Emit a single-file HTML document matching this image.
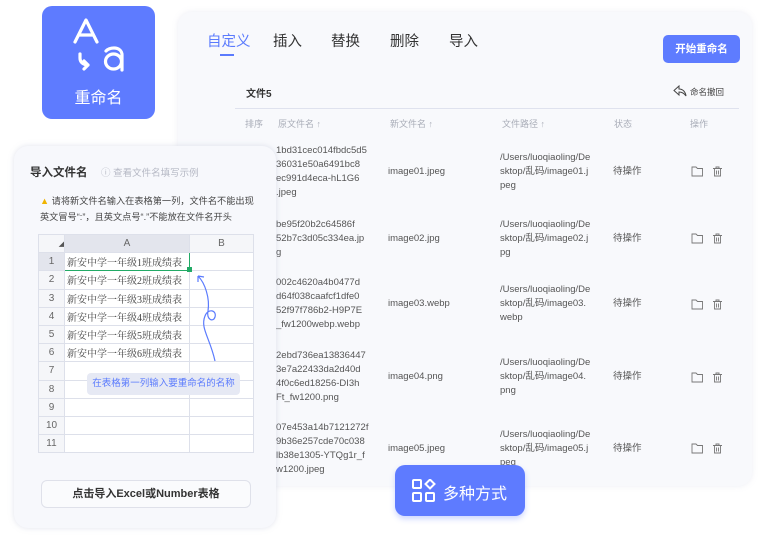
<!DOCTYPE html>
<html><head><meta charset="utf-8"><style>
*{margin:0;padding:0;box-sizing:border-box}
body{width:774px;height:545px;background:#fff;position:relative;overflow:hidden;font-family:"Liberation Sans","Noto Sans CJK SC",sans-serif;color:#333}
.abs{position:absolute}
.main{left:178px;top:12px;width:574px;height:474px;background:#f8f9fc;border-radius:14px;box-shadow:0 0 6px rgba(180,185,210,.25)}
.tab{top:30px;font-size:14.5px;color:#333}
.h{top:117px;font-size:9px;color:#a9adb8}
.c{font-size:9.5px;color:#555;line-height:14px}
.left{left:14px;top:146px;width:262px;height:382px;background:#f7f8fc;border-radius:14px;box-shadow:0 0 6px rgba(170,175,200,.35)}
table{border-collapse:collapse;font-size:10px}
td{border:1px solid #dde0ea;height:18.2px;background:#fff;color:#444;font-family:"Liberation Serif","Noto Serif CJK SC",serif}
td.n{width:26px;text-align:center;background:#f5f6f9;color:#666;font-family:"Liberation Sans",sans-serif}
</style></head><body>
<div class="abs main"></div>
<div class="abs tab" style="left:207px;color:#5b7bfd">自定义</div>
<div class="abs" style="left:220px;top:54px;width:14px;height:2px;background:#5b7bfd"></div>
<div class="abs tab" style="left:273px">插入</div>
<div class="abs tab" style="left:331px">替换</div>
<div class="abs tab" style="left:390px">删除</div>
<div class="abs tab" style="left:449px">导入</div>
<div class="abs" style="left:663px;top:35px;width:77px;height:28px;background:#5e7cff;border-radius:5px;color:#fff;font-size:10.5px;font-weight:bold;text-align:center;line-height:28px">开始重命名</div>
<div class="abs" style="left:246px;top:85px;font-size:10px;font-weight:bold;color:#333">文件5</div>
<svg class="abs" style="left:673px;top:85px" width="14" height="12" viewBox="0 0 14 12"><path d="M6 1L1 5.5 6 10V7c3 0 5 1 7 4-0.5-4-3-7-7-7V1z" fill="none" stroke="#444" stroke-width="1"/></svg>
<div class="abs" style="left:690px;top:86px;font-size:8.5px;color:#444">命名撤回</div>
<div class="abs" style="left:235px;top:108px;width:504px;height:1px;background:#dfe2ee"></div>
<div class="abs h" style="left:245px">排序</div>
<div class="abs h" style="left:278px">原文件名 ↑</div>
<div class="abs h" style="left:390px">新文件名 ↑</div>
<div class="abs h" style="left:502px">文件路径 ↑</div>
<div class="abs h" style="left:614px">状态</div>
<div class="abs h" style="left:690px">操作</div>

<div class="abs c" style="left:276px;top:144px">1bd31cec014fbdc5d5<br>36031e50a6491bc8<br>ec991d4eca-hL1G6<br>.jpeg</div>
<div class="abs c" style="left:388px;top:165px">image01.jpeg</div>
<div class="abs c" style="left:500px;top:151px">/Users/luoqiaoling/De<br>sktop/乱码/image01.j<br>peg</div>
<div class="abs c" style="left:613px;top:165px">待操作</div>

<div class="abs c" style="left:276px;top:218px">be95f20b2c64586f<br>52b7c3d05c334ea.jp<br>g</div>
<div class="abs c" style="left:388px;top:232px">image02.jpg</div>
<div class="abs c" style="left:500px;top:218px">/Users/luoqiaoling/De<br>sktop/乱码/image02.j<br>pg</div>
<div class="abs c" style="left:613px;top:232px">待操作</div>

<div class="abs c" style="left:276px;top:276px">002c4620a4b0477d<br>d64f038caafcf1dfe0<br>52f97f786b2-H9P7E<br>_fw1200webp.webp</div>
<div class="abs c" style="left:388px;top:297px">image03.webp</div>
<div class="abs c" style="left:500px;top:283px">/Users/luoqiaoling/De<br>sktop/乱码/image03.<br>webp</div>
<div class="abs c" style="left:613px;top:297px">待操作</div>

<div class="abs c" style="left:276px;top:349px">2ebd736ea13836447<br>3e7a22433da2d40d<br>4f0c6ed18256-DI3h<br>Ft_fw1200.png</div>
<div class="abs c" style="left:388px;top:370px">image04.png</div>
<div class="abs c" style="left:500px;top:356px">/Users/luoqiaoling/De<br>sktop/乱码/image04.<br>png</div>
<div class="abs c" style="left:613px;top:370px">待操作</div>

<div class="abs c" style="left:276px;top:421px">07e453a14b7121272f<br>9b36e257cde70c038<br>lb38e1305-YTQg1r_f<br>w1200.jpeg</div>
<div class="abs c" style="left:388px;top:442px">image05.jpeg</div>
<div class="abs c" style="left:500px;top:428px">/Users/luoqiaoling/De<br>sktop/乱码/image05.j<br>peg</div>
<div class="abs c" style="left:613px;top:442px">待操作</div>

<svg class="abs" style="left:690px;top:0" width="36" height="480" viewBox="0 0 36 480">
<g fill="none" stroke="#777" stroke-width="0.9">
<g id="ic"><path d="M2 167h4l1.5 1.5H12.5v7.5H2z"/><path d="M23 168.5h9M26 168.5v-1.5h3v1.5M24.5 168.5v7.5h6v-7.5M26.5 170.5v4M28.5 170.5v4"/></g>
<use href="#ic" y="67"/><use href="#ic" y="133"/><use href="#ic" y="206"/><use href="#ic" y="277"/>
</g></svg>

<div class="abs" style="left:42px;top:6px;width:113px;height:113px;background:#5e7bff;border-radius:10px"></div>
<svg class="abs" style="left:42px;top:6px" width="113" height="80" viewBox="0 0 113 80">
<g fill="none" stroke="#fff" stroke-width="3.2" stroke-linecap="round" stroke-linejoin="round">
<path d="M33 36L44 14 55 36M37 29h14"/>
<path d="M38 48v4c0 4 3 7 8 7M42 55l4 4-4 4"/>
<ellipse cx="71.5" cy="55.5" rx="8" ry="7.5"/>
<path d="M64 45c2-2 5-3 8-3 5 0 8 3 8 7v15"/>
</g></svg>
<div class="abs" style="left:42px;top:84px;width:113px;text-align:center;color:#fff;font-size:16px">重命名</div>

<div class="abs left"></div>
<div class="abs" style="left:30px;top:164px;font-size:11.5px;font-weight:bold;color:#333">导入文件名</div>
<div class="abs" style="left:101px;top:165px;font-size:9.5px;color:#b5b8c4">ⓘ 查看文件名填写示例</div>
<div class="abs" style="left:40px;top:193px;font-size:9.2px;color:#444;line-height:16px;width:220px"><span style="color:#f0b400">▲</span> 请将新文件名输入在表格第一列，文件名不能出现<br>英文冒号“:”，且英文点号“.”不能放在文件名开头</div>
<table class="abs" style="left:38px;top:234px;width:216px">
<tr><td class="n" style="height:15px;font-size:7px;text-align:right;color:#555">◢</td><td style="width:125px;background:#e3e5ed;text-align:center;height:15px;font-family:'Liberation Sans';color:#666">A</td><td style="background:#f5f6f9;text-align:center;font-family:'Liberation Sans';color:#666">B</td></tr>
<tr><td class="n" style="background:#e3e5ed">1</td><td style="border:1.5px solid #22aa66;padding-left:2px">新安中学一年级1班成绩表</td><td></td></tr>
<tr><td class="n">2</td><td style="padding-left:2px">新安中学一年级2班成绩表</td><td></td></tr>
<tr><td class="n">3</td><td style="padding-left:2px">新安中学一年级3班成绩表</td><td></td></tr>
<tr><td class="n">4</td><td style="padding-left:2px">新安中学一年级4班成绩表</td><td></td></tr>
<tr><td class="n">5</td><td style="padding-left:2px">新安中学一年级5班成绩表</td><td></td></tr>
<tr><td class="n">6</td><td style="padding-left:2px">新安中学一年级6班成绩表</td><td></td></tr>
<tr><td class="n">7</td><td></td><td></td></tr>
<tr><td class="n">8</td><td></td><td></td></tr>
<tr><td class="n">9</td><td></td><td></td></tr>
<tr><td class="n">10</td><td></td><td></td></tr>
<tr><td class="n">11</td><td></td><td></td></tr>
</table>
<div class="abs" style="left:187px;top:267px;width:5px;height:5px;background:#22aa66"></div>
<svg class="abs" style="left:190px;top:268px" width="40" height="100" viewBox="0 0 40 100"><path d="M25 93C20 70 10 60 15 48c3-8 12-6 10 1-2 6-9 2-7-6C20 30 15 15 8 8M8 8l0 6M8 8l6 1" fill="none" stroke="#5b7bfd" stroke-width="1.2"/></svg>
<div class="abs" style="left:87px;top:373px;width:153px;height:22px;background:#e6e9f4;border-radius:4px;color:#5b7bfd;font-size:9.5px;text-align:center;line-height:22px">在表格第一列输入要重命名的名称</div>
<div class="abs" style="left:41px;top:480px;width:210px;height:28px;border:1px solid #dfe1ea;border-radius:6px;background:#fafbfd;text-align:center;line-height:26px;font-size:11px;font-weight:bold;color:#333">点击导入Excel或Number表格</div>

<div class="abs" style="left:395px;top:465px;width:130px;height:51px;background:#5e7bff;border-radius:10px;box-shadow:0 3px 6px rgba(94,123,255,.3)"></div>
<svg class="abs" style="left:412px;top:479px" width="24" height="24" viewBox="0 0 24 24"><g fill="none" stroke="#fff" stroke-width="2"><rect x="1" y="1" width="8" height="8" rx="1"/><rect x="1" y="14" width="8" height="8" rx="1"/><rect x="14" y="14" width="8" height="8" rx="1"/><path d="M18 0.5l4.5 4.5-4.5 4.5-4.5-4.5z"/></g></svg>
<div class="abs" style="left:443px;top:480px;color:#fff;font-size:16px">多种方式</div>
</body></html>
